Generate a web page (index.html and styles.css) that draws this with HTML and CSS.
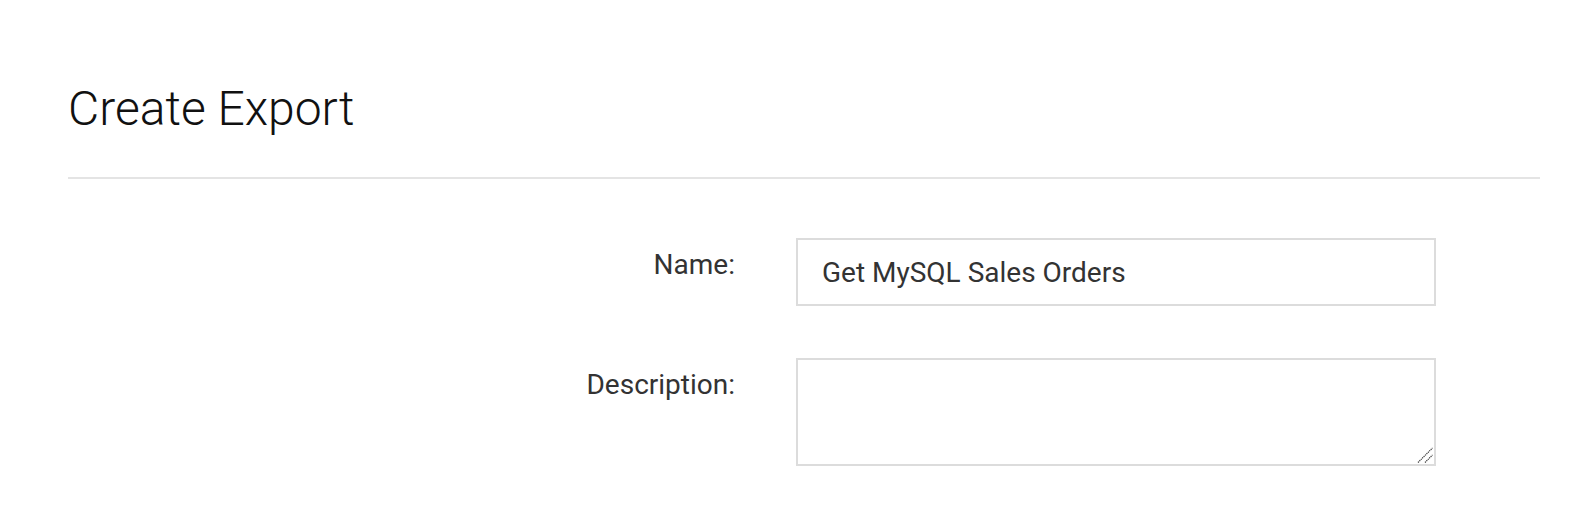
FILE: index.html
```html
<!DOCTYPE html>
<html lang="en">
<head>
<meta charset="utf-8">
<title>Create Export</title>
<link rel="stylesheet" href="styles.css">
</head>
<body>
<div class="page">
  <h1 class="title">Create Export</h1>
  <hr class="rule">
  <form class="form">
    <div class="row">
      <label class="label" for="name">Name:</label>
      <div class="field">
        <input class="input" id="name" type="text" value="Get MySQL Sales Orders">
      </div>
    </div>
    <div class="row">
      <label class="label" for="desc">Description:</label>
      <div class="field field-area">
        <textarea class="textarea" id="desc"></textarea>
        <svg class="grip" width="16" height="16" viewBox="0 0 16 16" aria-hidden="true">
          <line x1="1" y1="15.5" x2="15.5" y2="1" stroke="#333" stroke-width="1.2" stroke-dasharray="1.2 0.8"/>
          <line x1="8" y1="15.5" x2="15.5" y2="8" stroke="#333" stroke-width="1.2" stroke-dasharray="1.2 0.8"/>
        </svg>
      </div>
    </div>
  </form>
</div>
</body>
</html>
```

FILE: styles.css
```css
* { box-sizing: border-box; }
html, body {
  margin: 0;
  padding: 0;
  background: #ffffff;
}
body {
  font-family: Roboto, "Liberation Sans", Arial, sans-serif;
  color: #333333;
}
.page {
  margin-left: 68px;
  width: 1472px;
  padding-top: 82px;
}
.title {
  margin: 0;
  font-size: 48px;
  font-weight: 300;
  line-height: 53px;
  color: #111111;
}
.rule {
  margin: 42px 0 0 0;
  border: 0;
  height: 2px;
  background: #e4e4e4;
}
.form {
  padding-top: 59px;
  display: flex;
  flex-direction: column;
  gap: 52px;
}
.row {
  display: flex;
  align-items: flex-start;
  gap: 61px;
}
.label {
  width: 667px;
  text-align: right;
  font-size: 28px;
  line-height: 40px;
  padding-top: 7px;
  color: #333333;
}
.field {
  width: 640px;
}
.field-area {
  position: relative;
}
.input {
  display: block;
  width: 640px;
  height: 68px;
  border: 2px solid #dcdcdc;
  padding: 0 24px;
  font-family: Roboto, "Liberation Sans", Arial, sans-serif;
  font-size: 28px;
  color: #333333;
  background: #ffffff;
  outline: none;
  border-radius: 0;
}
.textarea {
  display: block;
  width: 640px;
  height: 108px;
  border: 2px solid #dcdcdc;
  padding: 12px 24px;
  font-family: Roboto, "Liberation Sans", Arial, sans-serif;
  font-size: 28px;
  color: #333333;
  background: #ffffff;
  outline: none;
  border-radius: 0;
  resize: none;
  margin: 0;
}
.grip {
  position: absolute;
  right: 3px;
  bottom: 3px;
  pointer-events: none;
}
```
